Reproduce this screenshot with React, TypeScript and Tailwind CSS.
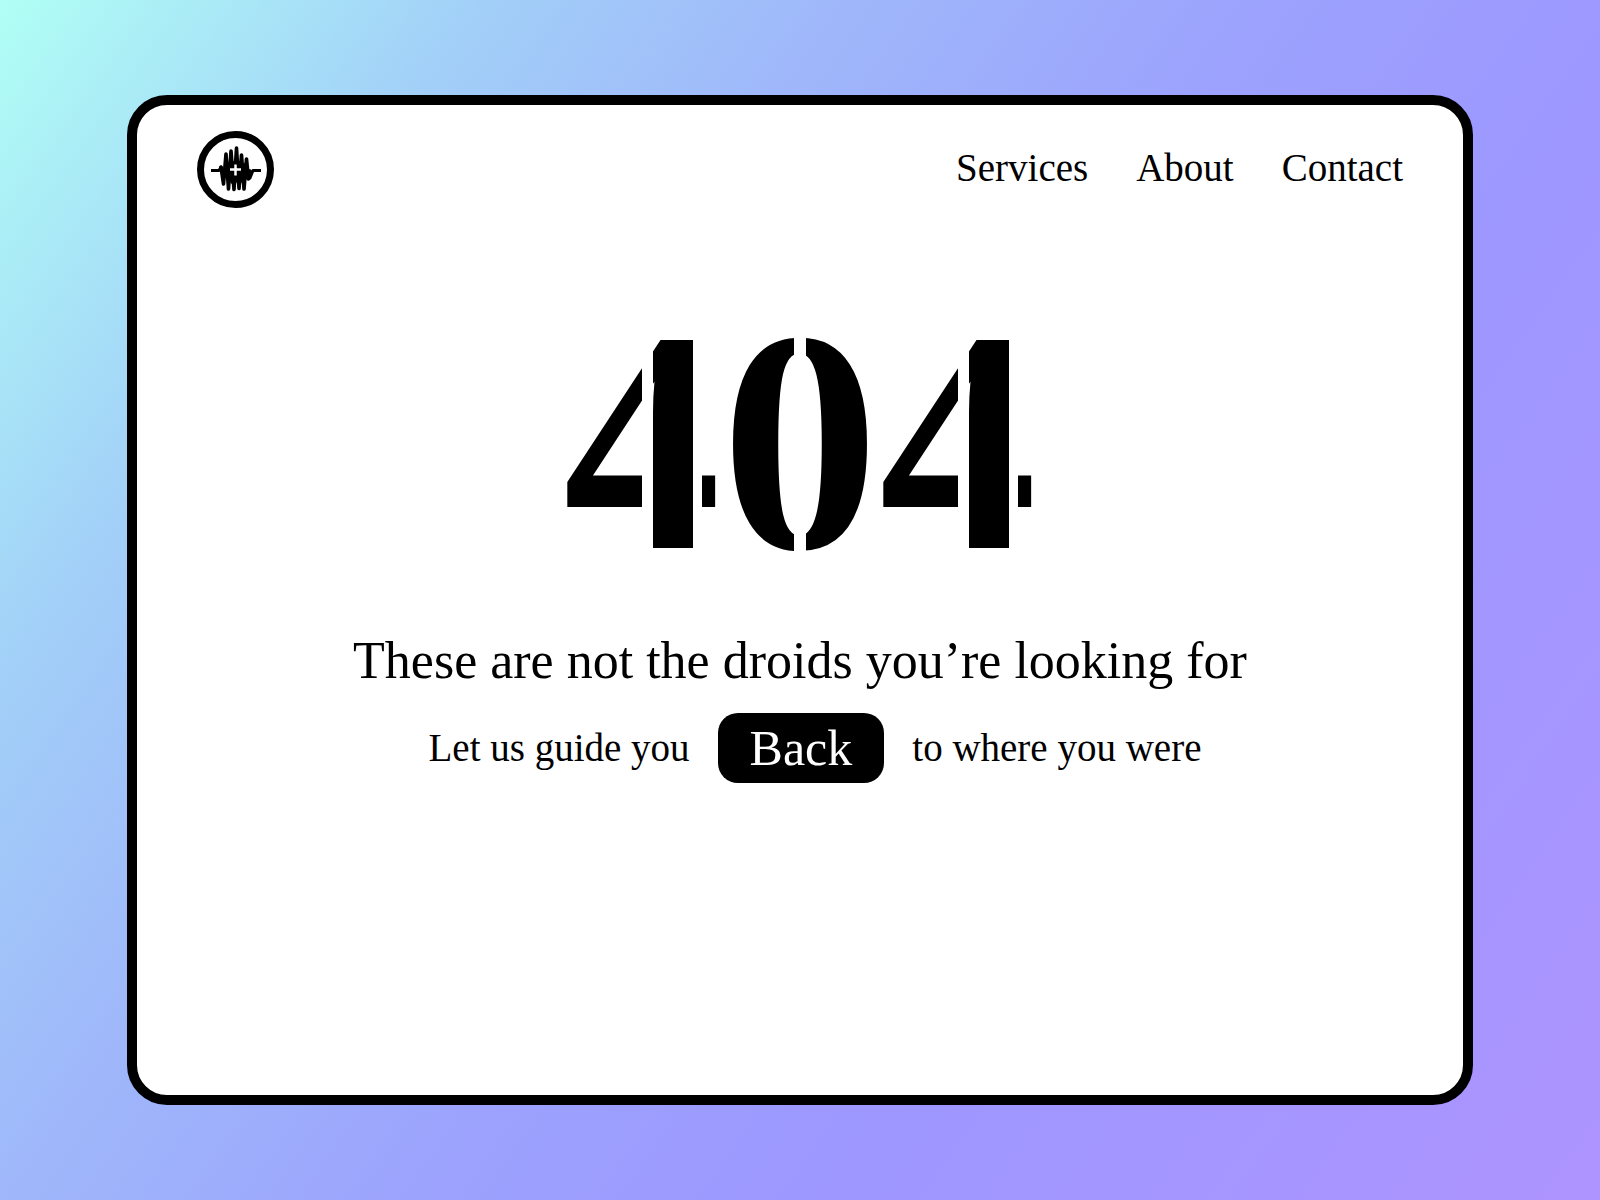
const SERIF = "font-['Liberation_Serif',serif]";

function Logo() {
  return (
    <svg viewBox="0 0 78 78" className="size-[78px]" role="img" aria-label="Home">
      <circle cx="38.500" cy="38.500" r="35" fill="#fff" stroke="#000" strokeWidth="7" />
      <g fill="none" stroke="#000" strokeLinecap="round" strokeLinejoin="round">
        <path
          strokeWidth="3.600"
          d="M24 36L26.500 53L29 23L31.500 58L34 20L37 58.500L39.500 17L42 57.500L44.500 24L47 58L49.500 28L51.500 48L53 40"
        />
        <path strokeWidth="3" strokeLinecap="butt" d="M14 39.500H22L24 36L28 44M50 44L53 47L56 39.500H64" />
        <path strokeWidth="6" d="M31 35V45M36 33V50M42 33V50M47 35V45" />
      </g>
      <path d="M38.500 33.500V44.500M33 38.500H44" stroke="#fff" strokeWidth="2.500" />
    </svg>
  );
}

const LINKS = ["Services", "About", "Contact"];

export default function App() {
  return (
    <div
      className={`${SERIF} flex min-h-screen bg-[linear-gradient(125deg,#b0fff5_0%,#a2cff8_20%,#9fb8fa_34%,#9ca2fd_52%,#9d97ff_68%,#ae94ff_100%)] px-[127px] py-[95px] text-black`}
    >
      <main className="flex flex-1 flex-col rounded-[40px] border-10 border-black bg-white">
        <header className="flex items-center justify-between px-[60px] pt-[26px]">
          <a href="#home">
            <Logo />
          </a>
          <nav className="flex gap-[48px] pb-1 text-[39px] leading-[48px]">
            {LINKS.map((label) => (
              <a key={label} href={`#${label.toLowerCase()}`}>
                {label}
              </a>
            ))}
          </nav>
        </header>
        <section className="mt-[92px] flex flex-col items-center">
          <h1 className="flex text-[316px] leading-[280px] font-bold text-transparent">
            <span className="bg-[linear-gradient(90deg,#000_50%,transparent_50%,transparent_57%,#000_57%,#000_82%,transparent_82%,transparent_88%,#000_88%)] bg-clip-text">
              4
            </span>
            <span className="bg-[linear-gradient(90deg,#000_46%,transparent_46%,transparent_54%,#000_54%)] bg-clip-text">
              0
            </span>
            <span className="bg-[linear-gradient(90deg,#000_50%,transparent_50%,transparent_57%,#000_57%,#000_82%,transparent_82%,transparent_88%,#000_88%)] bg-clip-text">
              4
            </span>
          </h1>
          <p className="mt-[48px] text-[52px] leading-[64px]">These are not the droids you’re looking for</p>
          <div className="mt-[20px] flex items-center gap-[28px] pl-[30px] text-[39px] leading-[48px]">
            <span>Let us guide you</span>
            <button
              type="button"
              className="h-[70px] rounded-[20px] bg-black px-[32px] text-[50px] leading-[64px] text-white"
            >
              Back
            </button>
            <span>to where you were</span>
          </div>
        </section>
      </main>
    </div>
  );
}
